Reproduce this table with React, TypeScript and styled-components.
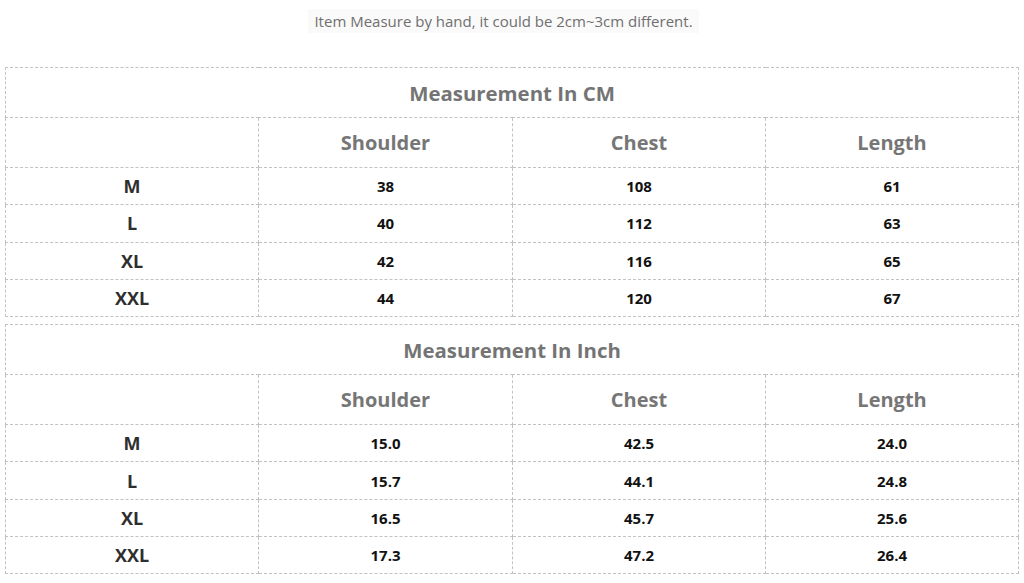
import React from 'react'
import styled, { createGlobalStyle } from 'styled-components'

const GlobalStyle = createGlobalStyle`
  html, body {
    margin: 0;
    padding: 0;
    background: #fff;
  }
`

const Page = styled.div`
  width: 1024px;
  height: 583px;
  padding: 0 6px 0 5px;
  box-sizing: border-box;
  font-family: 'Open Sans', 'Noto Sans', sans-serif;
  overflow: hidden;
`

const Caption = styled.div`
  height: 67px;
  display: flex;
  justify-content: center;
  align-items: flex-start;
  padding-top: 9px;
  box-sizing: border-box;
  padding-right: 16px;
`

const CaptionText = styled.span`
  font-size: 15px;
  line-height: 24px;
  color: #6f6f6f;
  background: #fafafa;
  padding: 0 6px;
`

const Table = styled.table`
  width: 1013px;
  border-collapse: collapse;
  table-layout: fixed;
  & + & {
    margin-top: 7px;
  }
`

const Cell = styled.td`
  border: 1px dashed #c2c2c2;
  text-align: center;
  padding: 0;
  vertical-align: middle;
  line-height: 22px;
`

const TitleCell = styled(Cell)`
  height: 49px;
  font-size: 20.4px;
  font-weight: 700;
  color: #747474;
`

const HeadCell = styled(Cell)`
  height: 49px;
  font-size: 20px;
  font-weight: 700;
  color: #767676;
`

const SizeCell = styled(Cell)`
  height: 36.3px;
  font-size: 18px;
  font-weight: 700;
  color: #2e2e2e;
`

const ValueCell = styled(Cell)`
  font-size: 15px;
  font-weight: 700;
  color: #111;
`

type Row = [string, string, string, string]

const cmRows: Row[] = [
  ['M', '38', '108', '61'],
  ['L', '40', '112', '63'],
  ['XL', '42', '116', '65'],
  ['XXL', '44', '120', '67'],
]

const inchRows: Row[] = [
  ['M', '15.0', '42.5', '24.0'],
  ['L', '15.7', '44.1', '24.8'],
  ['XL', '16.5', '45.7', '25.6'],
  ['XXL', '17.3', '47.2', '26.4'],
]

function SizeTable({ title, rows }: { title: string; rows: Row[] }) {
  return (
    <Table>
      <colgroup>
        <col style={{ width: 253 }} />
        <col style={{ width: 254 }} />
        <col style={{ width: 253 }} />
        <col style={{ width: 253 }} />
      </colgroup>
      <tbody>
        <tr>
          <TitleCell colSpan={4}>{title}</TitleCell>
        </tr>
        <tr>
          <HeadCell />
          <HeadCell>Shoulder</HeadCell>
          <HeadCell>Chest</HeadCell>
          <HeadCell>Length</HeadCell>
        </tr>
        {rows.map((r) => (
          <tr key={r[0]}>
            <SizeCell>{r[0]}</SizeCell>
            <ValueCell>{r[1]}</ValueCell>
            <ValueCell>{r[2]}</ValueCell>
            <ValueCell>{r[3]}</ValueCell>
          </tr>
        ))}
      </tbody>
    </Table>
  )
}

export default function App() {
  return (
    <Page>
      <GlobalStyle />
      <Caption>
        <CaptionText>Item Measure by hand, it could be 2cm~3cm different.</CaptionText>
      </Caption>
      <SizeTable title="Measurement In CM" rows={cmRows} />
      <SizeTable title="Measurement In Inch" rows={inchRows} />
    </Page>
  )
}
